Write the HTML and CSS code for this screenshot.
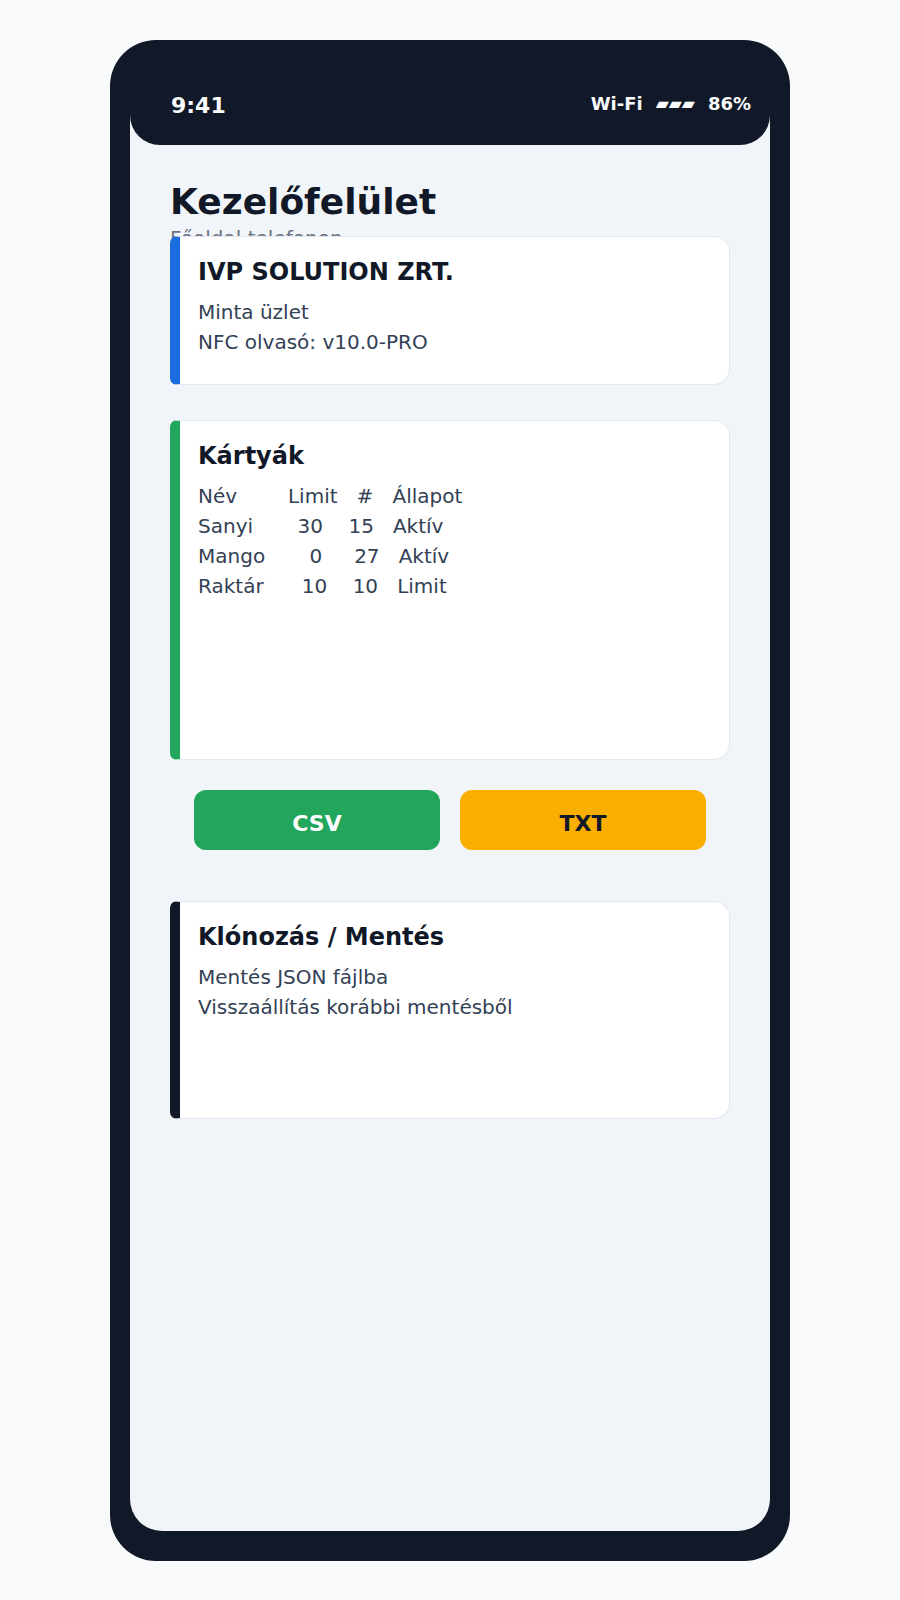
FILE: index.html
```html
<!DOCTYPE html>
<html lang="hu">
<head>
<meta charset="utf-8">
<title>Kezelőfelület</title>
<link rel="stylesheet" href="styles.css">
</head>
<body>
<div class="phone">
  <div class="screen">
    <div class="statusbar">
      <span class="time">9:41</span>
      <span class="status-right">
        <span>Wi-Fi</span>
        <span class="bars">▰▰▰</span>
        <span>86%</span>
      </span>
    </div>
    <div class="content">
      <header class="header">
        <h1 class="title">Kezelőfelület</h1>
        <p class="subtitle">Főoldal telefonon</p>
      </header>

      <section class="card card-blue">
        <h2 class="card-title">IVP SOLUTION ZRT.</h2>
        <div class="line">Minta üzlet</div>
        <div class="line">NFC olvasó: v10.0-PRO</div>
      </section>

      <section class="card card-green card-tall">
        <h2 class="card-title">Kártyák</h2>
        <div class="line pre">Név        Limit   #   Állapot</div>
        <div class="line pre">Sanyi       30    15   Aktív</div>
        <div class="line pre">Mango       0     27   Aktív</div>
        <div class="line pre">Raktár      10    10   Limit</div>
      </section>

      <div class="buttons">
        <button class="btn btn-csv">CSV</button>
        <button class="btn btn-txt">TXT</button>
      </div>

      <section class="card card-dark card-mid">
        <h2 class="card-title">Klónozás / Mentés</h2>
        <div class="line">Mentés JSON fájlba</div>
        <div class="line">Visszaállítás korábbi mentésből</div>
      </section>
    </div>
  </div>
</div>
</body>
</html>
```

FILE: styles.css
```css
* { box-sizing: border-box; }

html, body {
  margin: 0;
  padding: 0;
  background: #f8fafc;
  font-family: "DejaVu Sans", "Noto Sans", sans-serif;
}

.phone {
  width: 680px;
  margin: 40px auto 0;
  padding: 20px 20px 30px;
  background: #111827;
  border-radius: 46px;
}

.screen {
  height: 1471px;
  background: #f1f5f9;
  border-radius: 0 0 32px 32px;
  overflow: hidden;
}

.statusbar {
  height: 85px;
  background: #111827;
  border-radius: 0 0 30px 30px;
  display: flex;
  justify-content: space-between;
  align-items: center;
  padding: 5px 19px 0 41px;
  color: #f8fafc;
  font-weight: bold;
}

.time {
  font-size: 22px;
}

.status-right {
  display: flex;
  align-items: center;
  gap: 13px;
  font-size: 18px;
  margin-bottom: 4px;
}

.bars {
  font-size: 17px;
}

.content {
  padding: 35px 40px 0;
}

.header {
  height: 56px;
}

.title {
  margin: 0;
  font-size: 36px;
  line-height: 1.2;
  font-weight: bold;
  color: #111827;
}

.subtitle {
  margin: 0;
  font-size: 20px;
  line-height: 1.5;
  color: #6b7280;
}

.card {
  position: relative;
  background: #ffffff;
  border: 1px solid #e2e8f0;
  border-left: 10px solid #1a6ddf;
  border-radius: 7px 16px 16px 7px;
  padding: 21px 20px 27px 18px;
  margin-bottom: 35px;
}

.card-blue { border-left-color: #1a6ddf; }
.card-green { border-left-color: #22a65b; margin-bottom: 30px; }
.card-dark { border-left-color: #111827; }

.card-tall { min-height: 340px; }
.card-mid { min-height: 218px; }

.card-title {
  margin: 0 0 10px;
  font-size: 24px;
  line-height: 1.2;
  font-weight: bold;
  color: #111827;
}

.line {
  font-size: 20px;
  line-height: 1.5;
  color: #334155;
}

.pre {
  white-space: pre;
}

.buttons {
  display: flex;
  gap: 20px;
  padding: 0 24px;
  margin-bottom: 51px;
}

.btn {
  flex: 1;
  height: 60px;
  border: none;
  border-radius: 12px;
  font-family: "DejaVu Sans", sans-serif;
  font-size: 22px;
  font-weight: bold;
  padding: 7px 0 0;
}

.btn-csv {
  background: #22a65b;
  color: #ffffff;
}

.btn-txt {
  background: #f9ae00;
  color: #111827;
}
```
